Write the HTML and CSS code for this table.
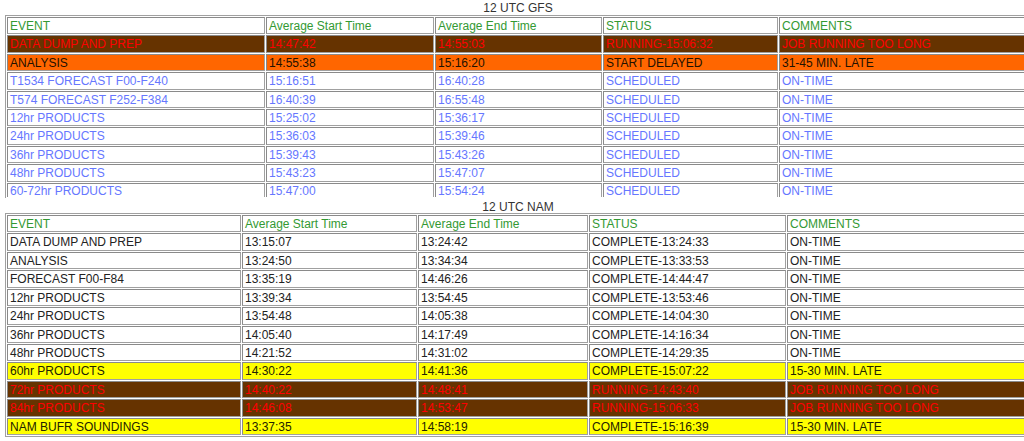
FILE: index.html
```html
<!DOCTYPE html>
<html>
<head>
<meta charset="utf-8">
<link rel="stylesheet" href="styles.css">
</head>
<body>
<div class="page">
  <div class="caption">12 UTC GFS</div>
  <table class="jobs gfs">
    <tr class="head"><th class="c1">EVENT</th><th class="c2">Average Start Time</th><th class="c3">Average End Time</th><th class="c4">STATUS</th><th class="c5">COMMENTS</th></tr>
    <tr class="running"><td>DATA DUMP AND PREP</td><td>14:47:42</td><td>14:55:03</td><td>RUNNING-15:06:32</td><td>JOB RUNNING TOO LONG</td></tr>
    <tr class="delayed"><td>ANALYSIS</td><td>14:55:38</td><td>15:16:20</td><td>START DELAYED</td><td>31-45 MIN. LATE</td></tr>
    <tr class="sched"><td>T1534 FORECAST F00-F240</td><td>15:16:51</td><td>16:40:28</td><td>SCHEDULED</td><td>ON-TIME</td></tr>
    <tr class="sched"><td>T574 FORECAST F252-F384</td><td>16:40:39</td><td>16:55:48</td><td>SCHEDULED</td><td>ON-TIME</td></tr>
    <tr class="sched"><td>12hr PRODUCTS</td><td>15:25:02</td><td>15:36:17</td><td>SCHEDULED</td><td>ON-TIME</td></tr>
    <tr class="sched"><td>24hr PRODUCTS</td><td>15:36:03</td><td>15:39:46</td><td>SCHEDULED</td><td>ON-TIME</td></tr>
    <tr class="sched"><td>36hr PRODUCTS</td><td>15:39:43</td><td>15:43:26</td><td>SCHEDULED</td><td>ON-TIME</td></tr>
    <tr class="sched"><td>48hr PRODUCTS</td><td>15:43:23</td><td>15:47:07</td><td>SCHEDULED</td><td>ON-TIME</td></tr>
    <tr class="sched cut"><td>60-72hr PRODUCTS</td><td>15:47:00</td><td>15:54:24</td><td>SCHEDULED</td><td>ON-TIME</td></tr>
  </table>
  <div class="caption second">12 UTC NAM</div>
  <table class="jobs nam">
    <tr class="head"><th class="c1">EVENT</th><th class="c2">Average Start Time</th><th class="c3">Average End Time</th><th class="c4">STATUS</th><th class="c5">COMMENTS</th></tr>
    <tr class="done"><td>DATA DUMP AND PREP</td><td>13:15:07</td><td>13:24:42</td><td>COMPLETE-13:24:33</td><td>ON-TIME</td></tr>
    <tr class="done"><td>ANALYSIS</td><td>13:24:50</td><td>13:34:34</td><td>COMPLETE-13:33:53</td><td>ON-TIME</td></tr>
    <tr class="done"><td>FORECAST F00-F84</td><td>13:35:19</td><td>14:46:26</td><td>COMPLETE-14:44:47</td><td>ON-TIME</td></tr>
    <tr class="done"><td>12hr PRODUCTS</td><td>13:39:34</td><td>13:54:45</td><td>COMPLETE-13:53:46</td><td>ON-TIME</td></tr>
    <tr class="done"><td>24hr PRODUCTS</td><td>13:54:48</td><td>14:05:38</td><td>COMPLETE-14:04:30</td><td>ON-TIME</td></tr>
    <tr class="done"><td>36hr PRODUCTS</td><td>14:05:40</td><td>14:17:49</td><td>COMPLETE-14:16:34</td><td>ON-TIME</td></tr>
    <tr class="done"><td>48hr PRODUCTS</td><td>14:21:52</td><td>14:31:02</td><td>COMPLETE-14:29:35</td><td>ON-TIME</td></tr>
    <tr class="late"><td>60hr PRODUCTS</td><td>14:30:22</td><td>14:41:36</td><td>COMPLETE-15:07:22</td><td>15-30 MIN. LATE</td></tr>
    <tr class="running"><td>72hr PRODUCTS</td><td>14:40:22</td><td>14:48:41</td><td>RUNNING-14:43:40</td><td>JOB RUNNING TOO LONG</td></tr>
    <tr class="running"><td>84hr PRODUCTS</td><td>14:46:08</td><td>14:53:47</td><td>RUNNING-15:06:33</td><td>JOB RUNNING TOO LONG</td></tr>
    <tr class="late"><td>NAM BUFR SOUNDINGS</td><td>13:37:35</td><td>14:58:19</td><td>COMPLETE-15:16:39</td><td>15-30 MIN. LATE</td></tr>
  </table>
</div>
</body>
</html>
```

FILE: styles.css
```css
html, body {
  margin: 0;
  padding: 0;
  background: #ffffff;
  overflow: hidden;
}
.page {
  width: 1026px;
  margin-left: 5px;
  font-family: "Liberation Sans", Arial, sans-serif;
  font-size: 12px;
  color: #222222;
}
.caption {
  box-sizing: border-box;
  height: 15px;
  padding-top: 1px;
  line-height: 15px;
  text-align: center;
  color: #333333;
}
.caption.second {
  padding-top: 2px;
}
.jobs {
  width: 1026px;
  box-sizing: border-box;
  table-layout: fixed;
  border-collapse: separate;
  border-spacing: 1px;
  border: 1px solid #a0a0a0;
}
.jobs.gfs {
  border-bottom: 0;
}
.jobs th, .jobs td {
  box-sizing: border-box;
  border: 1px solid #a0a0a0;
  border-top-color: #8a8a8a;
  border-left-color: #8a8a8a;
  padding: 1px 2px 0 2px;
  height: 17.4px;
  line-height: 14.4px;
  text-align: left;
  font-weight: normal;
  white-space: nowrap;
  overflow: hidden;
}
.jobs .cut td {
  height: 14.4px;
  border-bottom-width: 0;
  padding-top: 2px;
  line-height: 11.4px;
  overflow: visible;
}
.gfs .c1 { width: 258px; }
.gfs .c2 { width: 168px; }
.gfs .c3 { width: 167px; }
.gfs .c4 { width: 175px; }
.nam .c1 { width: 234px; }
.nam .c2 { width: 175px; }
.nam .c3 { width: 170px; }
.nam .c4 { width: 197px; }
.head th {
  color: #339933;
  background: #ffffff;
}
.running td {
  background: #663300;
  color: #ff0000;
}
.delayed td {
  background: #ff6600;
  color: #221100;
}
.sched td {
  background: #ffffff;
  color: #6677ff;
}
.done td {
  background: #ffffff;
  color: #222222;
}
.late td {
  background: #ffff00;
  color: #222200;
}
```
